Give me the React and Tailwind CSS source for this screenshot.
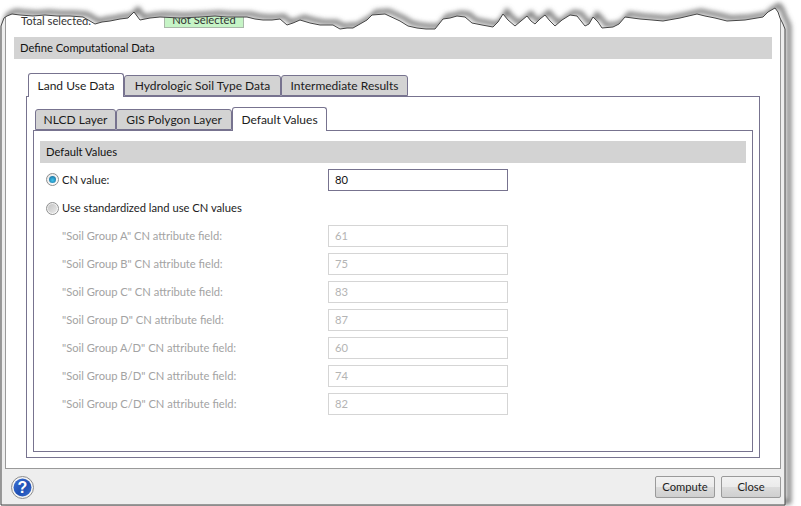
const font = { fontFamily: 'Lato, "Open Sans", sans-serif' };

const tornTop =
  "M1 26 L4 18 L7 16 L12 14 L20 15 L33 16 L45 15 L57 16 L70 16 L83 17 L90 21 L95 24 L102 22 L110 21 L120 19 L128 18 L134 12 L137 16 L140 20 L150 18 L160 17 L180 18 L200 17 L215 16 L227 17 L247 17 L255 19 L263 20 L272 20 L280 19 L287 25 L293 23 L300 20 L310 23 L320 25 L333 25 L340 29 L347 28 L353 28 L360 24 L367 20 L372 15 L385 14 L400 21 L408 26 L417 28 L426 29 L435 29 L443 19 L450 18 L457 16 L465 17 L472 23 L482 25 L493 27 L498 22 L503 14 L508 20 L515 26 L521 21 L527 16 L531 21 L535 24 L540 19 L545 15 L550 21 L555 26 L562 20 L570 15 L577 16 L581 21 L585 26 L589 24 L593 17 L598 22 L602 28 L613 27 L619 24 L625 17 L640 19 L652 20 L663 21 L680 18 L697 14 L705 16 L715 18 L727 21 L745 20 L763 17 L768 12 L775 8 L778 12 L780 18 L783 24 L785 29";
const frame = tornTop + " L785 505 L1 505 Z";

function Tab({ label, active, className }) {
  return (
    <div
      className={`flex items-center justify-center border border-[#77738f] rounded-t-[3px] text-[12px] text-[#1c1c1c] ${
        active ? "bg-white border-b-0 relative z-10" : "bg-[#d3d3d3] mt-[2px]"
      } ${className}`}
    >
      {label}
    </div>
  );
}

function Radio({ checked }) {
  return (
    <span className="flex items-center justify-center w-[13px] h-[13px] rounded-full border border-[#8e8f8f] bg-[linear-gradient(135deg,#e6e6e6,#ffffff)] shrink-0">
      {checked ? (
        <span className="w-[7px] h-[7px] rounded-full bg-[radial-gradient(circle_at_50%_60%,#3fc4ee,#14608f)]"></span>
      ) : (
        <span className="w-[9px] h-[9px] rounded-full bg-[linear-gradient(135deg,#c4c4c4,#e9e9e9)]"></span>
      )}
    </span>
  );
}

function SoilRow({ label, value }) {
  return (
    <div className="flex items-center h-[22px] pl-[22px]">
      <span className="w-[266px] text-[11.2px] text-[#a3a3a3]">{label}</span>
      <div className="w-[180px] h-[22px] flex items-center pl-[6px] border border-[#d5d5d5] text-[11.2px] text-[#b4b4b4]">
        {value}
      </div>
    </div>
  );
}

function HelpIcon() {
  return (
    <svg width="23" height="23" viewBox="0 0 23 23">
      <defs>
        <linearGradient id="helpBlue" x1="0" y1="0" x2="1" y2="1">
          <stop offset="0" stopColor="#3f74d6" />
          <stop offset="0.55" stopColor="#1f4fb4" />
          <stop offset="1" stopColor="#3a6fd0" />
        </linearGradient>
      </defs>
      <circle cx="11.5" cy="11.5" r="11" fill="#f4f4f4" stroke="#8c8c8c" strokeWidth="1" />
      <circle cx="11.5" cy="11.5" r="9" fill="url(#helpBlue)" />
      <text x="11.5" y="17" textAnchor="middle" fontSize="16" fontWeight="700" fill="#ffffff" fontFamily="Liberation Sans, sans-serif">
        ?
      </text>
    </svg>
  );
}

const soilRows = [
  ['"Soil Group A" CN attribute field:', "61"],
  ['"Soil Group B" CN attribute field:', "75"],
  ['"Soil Group C" CN attribute field:', "83"],
  ['"Soil Group D" CN attribute field:', "87"],
  ['"Soil Group A/D" CN attribute field:', "60"],
  ['"Soil Group B/D" CN attribute field:', "74"],
  ['"Soil Group C/D" CN attribute field:', "82"],
];

export default function App() {
  return (
    <div className="relative w-[801px] h-[506px] bg-white overflow-hidden" style={font}>
      <div className="flex flex-col w-[786px] h-[506px] bg-[#eeeeee] pl-[5px] pr-[5px]">
        <div className="flex flex-col h-[469px] bg-white border-x border-b border-[#999999] px-2 pb-[10px]">
          <div className="flex h-[28px] shrink-0 items-end mb-[9px]">
            <span className="w-[150px] pl-[7px] text-[11.2px] text-[#333333] leading-[14px]">Total selected:</span>
            <div className="w-[80px] h-[18px] flex items-center justify-center pt-[3px] bg-[#c6f4c6] border border-[#a9b8a9] text-[11.2px] text-[#333333]">
              Not Selected
            </div>
          </div>

          <div className="flex items-center h-[22px] shrink-0 bg-[#d3d3d3] pl-[6px] text-[11.2px] text-[#111111]">
            Define Computational Data
          </div>

          <div className="flex flex-col flex-1 mt-[14px] mx-3">
            <div className="flex h-[23px] shrink-0 pl-[2px]">
              <Tab label="Land Use Data" active className="w-[96px] h-[24px]" />
              <Tab label="Hydrologic Soil Type Data" className="w-[157px] h-[21px]" />
              <Tab label="Intermediate Results" className="w-[127px] h-[21px]" />
            </div>

            <div className="flex flex-col flex-1 border border-[#77738f] px-[6px] pt-[10px] pb-[5px]">
              <div className="flex h-[23px] shrink-0 pl-[2px]">
                <Tab label="NLCD Layer" className="w-[81px] h-[21px]" />
                <Tab label="GIS Polygon Layer" className="w-[116px] h-[21px]" />
                <Tab label="Default Values" active className="w-[95px] h-[24px]" />
              </div>

              <div className="flex flex-col flex-1 border border-[#77738f] px-[6px] pt-[10px]">
                <div className="flex items-center h-[22px] shrink-0 bg-[#d3d3d3] pl-[6px] text-[11.2px] text-[#111111]">
                  Default Values
                </div>
                <div className="flex flex-col gap-[6px] mt-[6px]">
                  <div className="flex items-center h-[22px]">
                    <div className="flex items-center gap-[3px] w-[288px] pl-[6px] text-[11.2px] text-[#1c1c1c]">
                      <Radio checked />
                      CN value:
                    </div>
                    <div className="w-[180px] h-[22px] flex items-center pl-[6px] border border-[#77738f] text-[11.2px] text-[#111111]">
                      80
                    </div>
                  </div>
                  <div className="flex items-center gap-[3px] h-[22px] pl-[6px] text-[11.2px] text-[#1c1c1c]">
                    <Radio />
                    Use standardized land use CN values
                  </div>
                  {soilRows.map(([label, value]) => (
                    <SoilRow key={label} label={label} value={value} />
                  ))}
                </div>
              </div>
            </div>
          </div>
        </div>

        <div className="flex items-center flex-1 pl-[6px] pb-[1px]">
          <HelpIcon />
          <button className="ml-auto w-[60px] h-[22px] rounded-[2px] border border-[#9a9a9a] bg-[linear-gradient(#f2f2f2,#ebebeb_50%,#dcdcdc_50%,#cfcfcf)] text-[11.2px] text-[#1c1c1c]">
            Compute
          </button>
          <button className="ml-[6px] w-[60px] h-[22px] rounded-[2px] border border-[#9a9a9a] bg-[linear-gradient(#f2f2f2,#ebebeb_50%,#dcdcdc_50%,#cfcfcf)] text-[11.2px] text-[#1c1c1c]">
            Close
          </button>
        </div>
      </div>

      {/* torn paper edge and shadow over the dialog */}
      <svg className="absolute inset-0 pointer-events-none" width="801" height="506" viewBox="0 0 801 506">
        <defs>
          <filter id="edgeBlur" x="-5%" y="-5%" width="110%" height="110%">
            <feGaussianBlur stdDeviation="2.5" />
          </filter>
          <clipPath id="outside">
            <path clipRule="evenodd" d={`M0 0 H801 V506 H0 Z ${frame}`} />
          </clipPath>
        </defs>
        <path fill="#ffffff" fillRule="evenodd" d={`M0 0 H801 V506 H0 Z ${frame}`} />
        <g clipPath="url(#outside)">
          <path d={frame} transform="translate(4 -3)" fill="none" stroke="#6a6a6a" strokeWidth="4" filter="url(#edgeBlur)" />
        </g>
        <path d={frame} fill="none" stroke="#454545" strokeWidth="1" />
      </svg>
    </div>
  );
}
